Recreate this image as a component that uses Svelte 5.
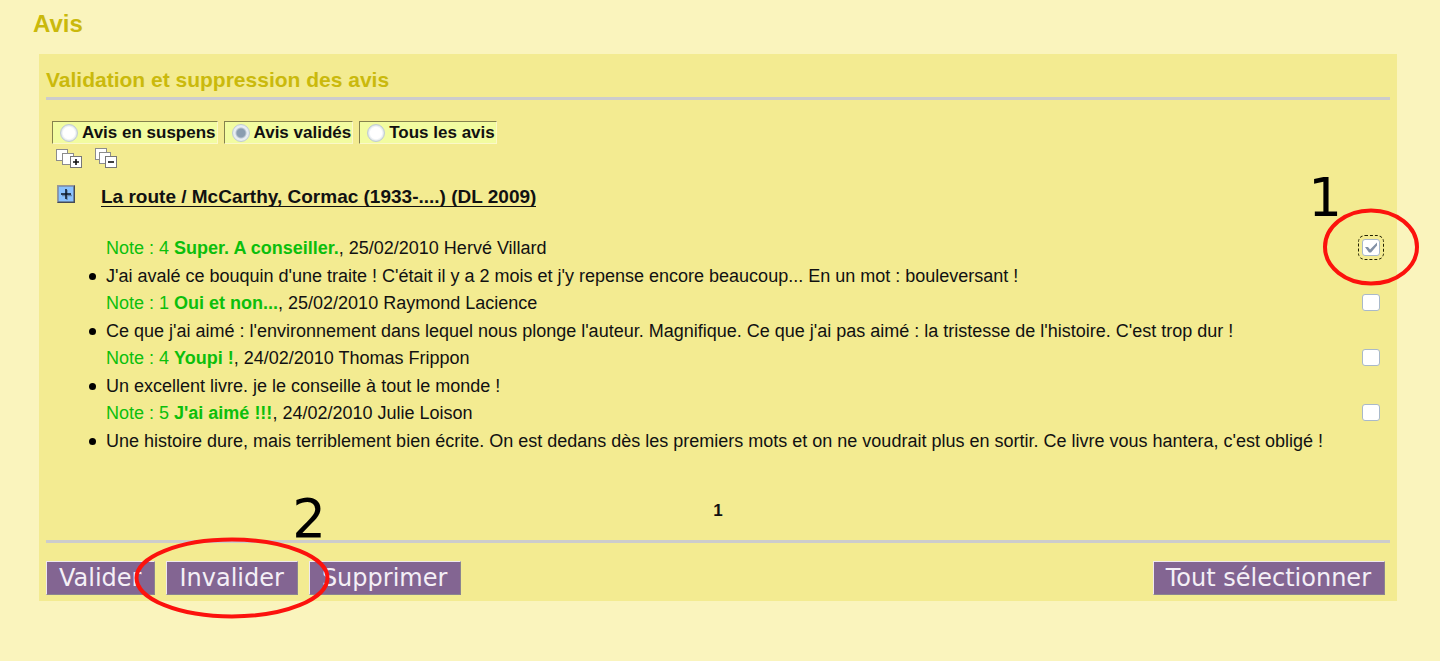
<script>
  const filters = [
    { value: 'pending', label: 'Avis en suspens' },
    { value: 'valid', label: 'Avis validés' },
    { value: 'all', label: 'Tous les avis' }
  ];
  let filter = $state('valid');

  let reviews = $state([
    {
      note: 4,
      title: 'Super. A conseiller.',
      by: '25/02/2010 Hervé Villard',
      text: "J'ai avalé ce bouquin d'une traite ! C'était il y a 2 mois et j'y repense encore beaucoup... En un mot : bouleversant !",
      checked: true
    },
    {
      note: 1,
      title: 'Oui et non...',
      by: '25/02/2010 Raymond Lacience',
      text: "Ce que j'ai aimé : l'environnement dans lequel nous plonge l'auteur. Magnifique. Ce que j'ai pas aimé : la tristesse de l'histoire. C'est trop dur !",
      checked: false
    },
    {
      note: 4,
      title: 'Youpi !',
      by: '24/02/2010 Thomas Frippon',
      text: 'Un excellent livre. je le conseille à tout le monde !',
      checked: false
    },
    {
      note: 5,
      title: "J'ai aimé !!!",
      by: '24/02/2010 Julie Loison',
      text: "Une histoire dure, mais terriblement bien écrite. On est dedans dès les premiers mots et on ne voudrait plus en sortir. Ce livre vous hantera, c'est obligé !",
      checked: false
    }
  ]);

  function selectAll() {
    for (const r of reviews) r.checked = true;
  }
</script>

<main>
  <h1>Avis</h1>
  <form class="panel" onsubmit={(e) => e.preventDefault()}>
    <h2>Validation et suppression des avis</h2>

    <div class="content">
      <div class="filters">
        {#each filters as f}
          <label class="filter">
            <input type="radio" name="filter" value={f.value} bind:group={filter} />
            <span>{f.label}</span>
          </label>
        {/each}
      </div>

      <div class="tools">
        <button type="button" class="icon" aria-label="Tout déplier">
          <svg width="26" height="20" viewBox="0 0 26 20" fill="#fff" stroke="#8c8c8c">
            <rect x="0.5" y="1.5" width="11" height="11" />
            <rect x="6.5" y="5.5" width="11" height="11" />
            <rect x="14.5" y="8.5" width="11" height="11" stroke="#777" />
            <path d="M17 14h6M20 11v6" stroke="#111" stroke-width="1.6" />
          </svg>
        </button>
        <button type="button" class="icon" aria-label="Tout replier">
          <svg width="22" height="20" viewBox="0 0 22 20" fill="#fff" stroke="#8c8c8c">
            <rect x="0.5" y="0.5" width="11" height="11" />
            <rect x="4.5" y="4.5" width="11" height="11" />
            <rect x="10.5" y="8.5" width="11" height="11" stroke="#777" />
            <path d="M13 14h6" stroke="#111" stroke-width="1.6" />
          </svg>
        </button>
      </div>

      <div class="record">
        <button type="button" class="icon" aria-label="Déplier la notice">
          <svg width="18" height="18" viewBox="0 0 18 18" fill="none">
            <rect width="18" height="18" fill="#444a55" />
            <path d="M0 18V0h18l-1.5 1.5h-15v15z" fill="#98979a" />
            <rect x="1.5" y="1.5" width="15" height="15" fill="#8ac2ff" />
            <path d="M5 10.500h10M10 5v10" stroke="#6686ad" stroke-width="1.500" />
            <path d="M4 9h10M9 4v10" stroke="#0a1626" stroke-width="1.500" />
          </svg>
        </button>
        <a href="#notice">La route / McCarthy, Cormac (1933-....) (DL 2009)</a>
      </div>

      <ul>
        {#each reviews as r, i}
          <li>
            <div class="head">
              <label for="review-{i}">
                <span class="note">Note : {r.note} <b>{r.title}</b></span>, {r.by}
              </label>
              <span class="tick">
                <input id="review-{i}" type="checkbox" class:focused={i === 0} bind:checked={r.checked} />
                {#if i === 0}
                  <svg class="ring" viewBox="0 0 96 78" aria-hidden="true">
                    <ellipse cx="48" cy="39" rx="46" ry="36.500" />
                  </svg>
                  <span class="step first">1</span>
                {/if}
              </span>
            </div>
            <p>{r.text}</p>
          </li>
        {/each}
      </ul>

      <div class="pager"><b>1</b></div>
    </div>

    <div class="actions">
      <button type="button">Valider</button>
      <span class="target">
        <button type="button">Invalider</button>
        <svg class="ring" viewBox="0 0 196 82" aria-hidden="true">
          <ellipse cx="98" cy="41" rx="95.500" ry="38.500" />
        </svg>
        <span class="step second">2</span>
      </span>
      <button type="button">Supprimer</button>
      <button type="button" class="last" onclick={selectAll}>Tout sélectionner</button>
    </div>
  </form>
</main>

<style>
  :global(body) {
    margin: 0;
    background: #faf4bd;
    font-family: 'Liberation Sans', Arial, sans-serif;
    font-size: 17px;
    color: #111;
  }
  main {
    padding: 10px 43px 59px 39px;
  }
  h1 {
    margin: 0 0 16px -6px;
    font-size: 24px;
    line-height: 28px;
    color: #cab90c;
  }
  .panel {
    background: #f3eb91;
    padding: 12px 7px 6px;
  }
  h2 {
    margin: 0;
    padding-bottom: 3px;
    border-bottom: 3px solid #ccc;
    font-size: 21px;
    line-height: 28px;
    color: #cab90c;
  }
  .content {
    padding: 21px 6px 0;
  }
  .filters {
    display: flex;
    gap: 6px;
  }
  .filter {
    display: flex;
    align-items: center;
    gap: 4px;
    padding: 0 1px 0 7px;
    border: 1px solid #fbf8c8;
    border-top-color: #85824d;
    border-left-color: #85824d;
    background: #f2fca0;
    font-weight: bold;
    line-height: 21px;
  }
  input {
    appearance: none;
    margin: 0;
    border: 1px solid #a9b9c9;
    background: #fff;
  }
  input[type='radio'] {
    width: 18px;
    height: 18px;
    border-color: #c0ccd4;
    border-radius: 50%;
    background: radial-gradient(circle, #fff 50%, #dde4ea 70%);
  }
  input[type='radio']:checked {
    background: radial-gradient(circle, #8a9db0 4px, #e9eef3 6px, #e3e9ef 75%);
  }
  .tools {
    display: flex;
    gap: 13px;
    padding: 4px 4px 0;
  }
  .icon {
    display: block;
    padding: 0;
    border: 0;
    background: none;
  }
  .icon svg {
    display: block;
  }
  .record {
    display: flex;
    align-items: flex-start;
    gap: 26px;
    padding: 17px 5px 0;
  }
  .record a {
    margin-top: 2px;
    border-bottom: 1px solid #111;
    color: inherit;
    font-size: 19px;
    font-weight: bold;
    line-height: 19px;
    text-decoration: none;
  }
  ul {
    margin: 0;
    padding: 28px 4px 0 54px;
    font-size: 18px;
    list-style: none;
  }
  li {
    padding-bottom: 1px;
  }
  .head {
    display: flex;
    justify-content: space-between;
    align-items: center;
    line-height: 26px;
  }
  .note {
    color: #0cbf0c;
  }
  .tick {
    position: relative;
    display: flex;
    margin-bottom: 2px;
  }
  input[type='checkbox'] {
    width: 18px;
    height: 17px;
    border-radius: 3px;
  }
  input[type='checkbox']:checked {
    background: #fff
      url("data:image/svg+xml,%3Csvg xmlns='http://www.w3.org/2000/svg' viewBox='0 0 16 15'%3E%3Cpath d='M2 7l3 0 2 2.500 7-7v3L8 12.500H6z' fill='%238291a6'/%3E%3C/svg%3E")
      center / 100% 100%;
  }
  .focused {
    outline: 1px dashed #222200;
    outline-offset: 3px;
  }
  p {
    position: relative;
    margin: 2px 0 0;
    line-height: 26px;
  }
  p::before {
    content: '';
    position: absolute;
    left: -17px;
    top: 10px;
    width: 7px;
    height: 7px;
    border-radius: 50%;
    background: #000;
  }
  .pager {
    padding: 44px 0 17px;
    line-height: 24px;
    text-align: center;
  }
  .actions {
    display: flex;
    gap: 11px;
    padding: 18px 5px 0 0;
    border-top: 3px solid #ccc;
  }
  .actions button {
    padding: 0 13px 0 12px;
    border: 1px solid #efe8f0;
    border-right-color: #8b8490;
    border-bottom-color: #8b8490;
    background: #836592;
    color: #f4eff6;
    font: 24px/32px 'DejaVu Sans', sans-serif;
  }
  .last {
    margin-left: auto;
  }
  .target {
    position: relative;
    display: flex;
  }
  .ring {
    position: absolute;
    left: 50%;
    top: 50%;
    translate: -50% -50%;
    fill: none;
    stroke: #fc120d;
    stroke-width: 4px;
    pointer-events: none;
    z-index: 1;
  }
  .tick .ring {
    width: 96px;
  }
  .target .ring {
    width: 196px;
  }
  .step {
    position: absolute;
    font: 53px/60px 'DejaVu Sans', sans-serif;
    color: #000;
  }
  .first {
    right: 38px;
    bottom: 28px;
  }
  .second {
    right: -28px;
    bottom: 46px;
  }
</style>
